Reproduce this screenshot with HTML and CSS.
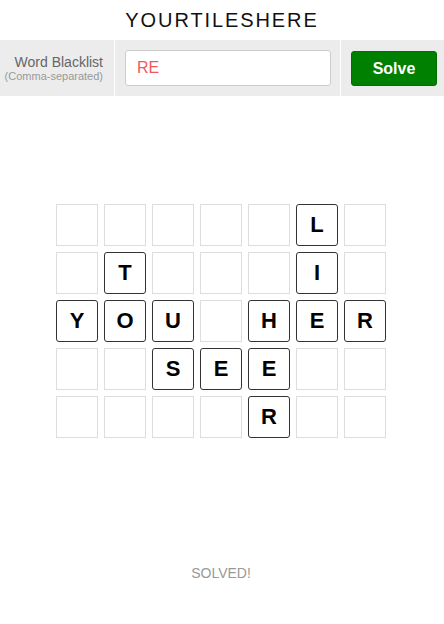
FILE: index.html
```html
<!DOCTYPE html>
<html>
<head>
<meta charset="utf-8">
<link rel="stylesheet" href="styles.css">
</head>
<body>
<header class="title">YOURTILESHERE</header>
<div class="toolbar">
  <div class="label-cell">
    <div class="label">Word Blacklist</div>
    <div class="sublabel">(Comma-separated)</div>
  </div>
  <div class="input-cell">
    <div class="input">RE</div>
  </div>
  <div class="button-cell">
    <button class="solve">Solve</button>
  </div>
</div>
<main class="board">
  <div class="grid">
    <div class="cell"></div><div class="cell"></div><div class="cell"></div><div class="cell"></div><div class="cell"></div><div class="cell tile">L</div><div class="cell"></div>
    <div class="cell"></div><div class="cell tile">T</div><div class="cell"></div><div class="cell"></div><div class="cell"></div><div class="cell tile">I</div><div class="cell"></div>
    <div class="cell tile">Y</div><div class="cell tile">O</div><div class="cell tile">U</div><div class="cell"></div><div class="cell tile">H</div><div class="cell tile">E</div><div class="cell tile">R</div>
    <div class="cell"></div><div class="cell"></div><div class="cell tile">S</div><div class="cell tile">E</div><div class="cell tile">E</div><div class="cell"></div><div class="cell"></div>
    <div class="cell"></div><div class="cell"></div><div class="cell"></div><div class="cell"></div><div class="cell tile">R</div><div class="cell"></div><div class="cell"></div>
  </div>
</main>
<footer class="status">SOLVED!</footer>
</body>
</html>
```
FILE: styles.css
```css
* { box-sizing: border-box; }
html, body { margin: 0; padding: 0; background: #fff; }
body { font-family: "Liberation Sans", Arial, sans-serif; width: 444px; height: 624px; }
.title {
  height: 40px;
  display: flex; align-items: center; justify-content: center;
  font-size: 20px; letter-spacing: 1.9px; color: #111;
  padding-left: 0px;
}
.toolbar {
  display: flex; height: 56px; background: #ececec;
}
.label-cell {
  width: 115px; padding-right: 11px;
  display: flex; flex-direction: column; justify-content: center; align-items: flex-end;
  border-right: 1px solid #fff;
}
.label { font-size: 14px; color: #666; line-height: 16px; }
.sublabel { font-size: 11px; color: #999; line-height: 12px; }
.input-cell {
  width: 226px; padding: 0 9px 0 10px;
  display: flex; align-items: center;
  border-right: 1px solid #fff;
}
.input {
  width: 100%; height: 36px; background: #fff; border: 1px solid #ccc; border-radius: 3px;
  font-size: 16px; color: #f05a5a; padding-left: 11px; display: flex; align-items: center;
}
.button-cell {
  flex: 1; display: flex; align-items: center; padding-left: 10px;
}
.solve {
  width: 86px; height: 35px; background: #008000; color: #fff; border: 1px solid #007000;
  border-radius: 3px; font-family: "Liberation Sans", Arial, sans-serif; font-weight: bold; font-size: 16px;
  padding: 0; margin-top: 1px;
}
.board { display: flex; justify-content: center; padding-top: 108px; }
.grid {
  display: grid; grid-template-columns: repeat(7, 42px); grid-auto-rows: 42px; gap: 6px;
  margin-left: -2px;
}
.cell { border: 1px solid #ddd; }
.tile {
  border: 1px solid #333; border-radius: 3px;
  display: flex; align-items: center; justify-content: center;
  font-weight: bold; font-size: 22px; color: #000;
}
.status {
  text-align: center; color: #999; font-size: 14px; margin-top: 127px; padding-right: 2px;
}
```
